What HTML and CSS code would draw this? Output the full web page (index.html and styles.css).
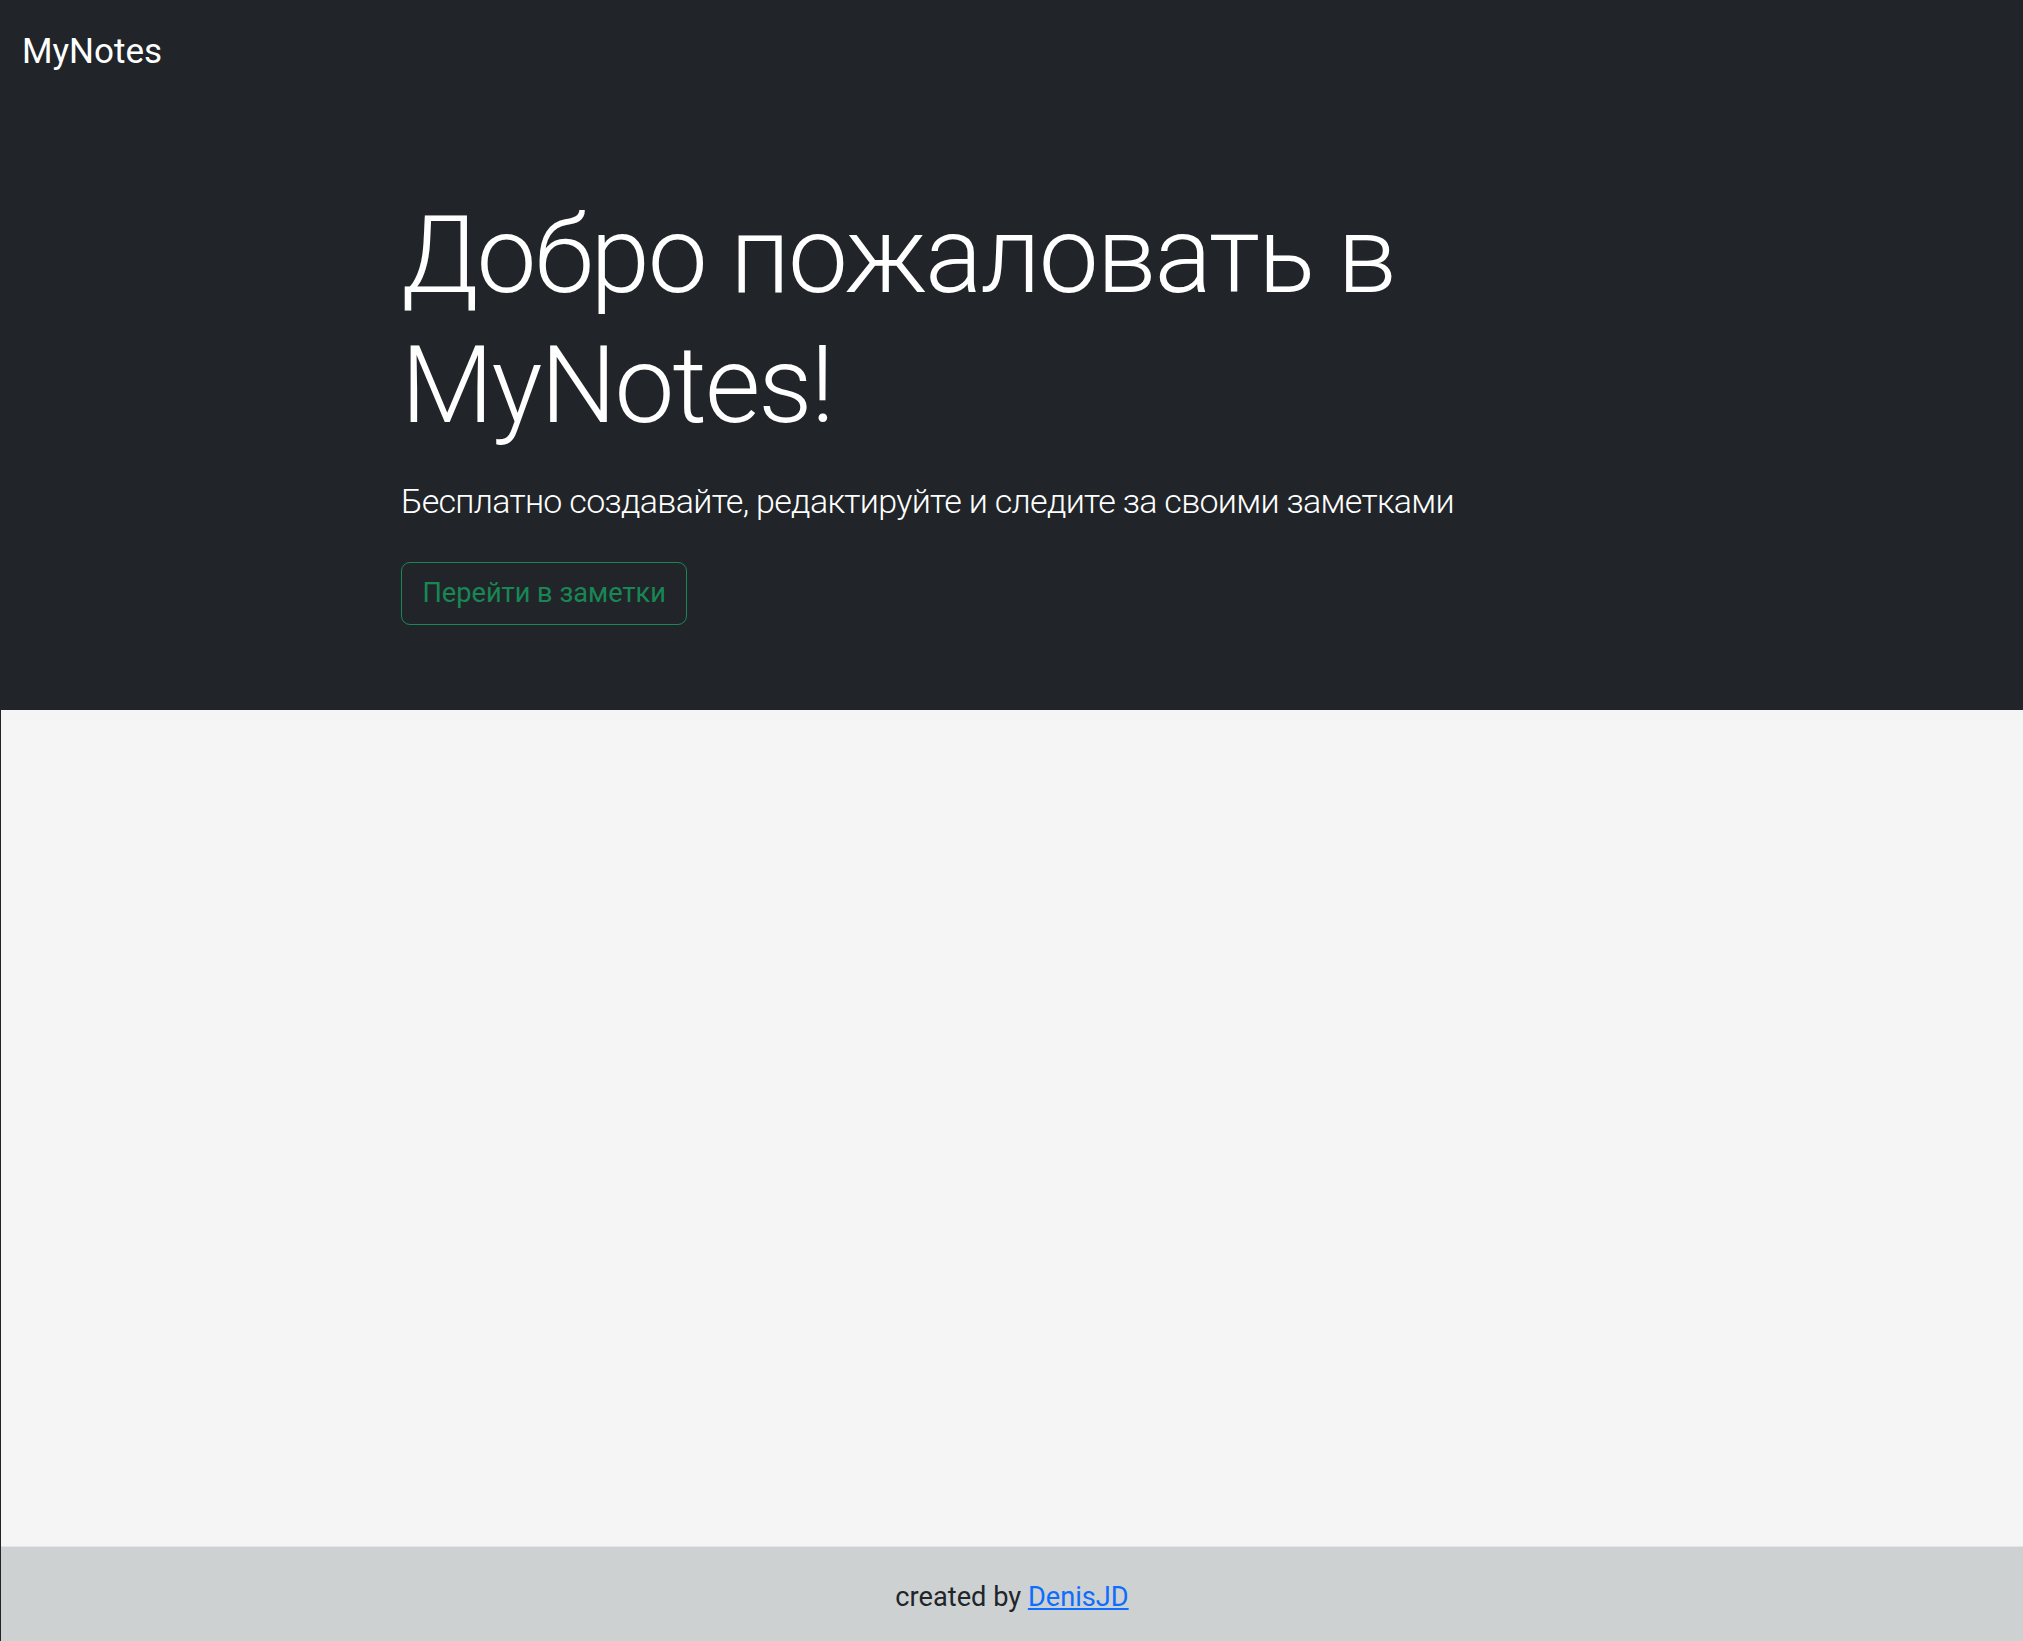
FILE: index.html
```html
<!DOCTYPE html>
<html lang="ru">
<head>
<meta charset="utf-8">
<title>MyNotes</title>
<link rel="stylesheet" href="styles.css">
</head>
<body>
<div class="top">
  <nav class="navbar">
    <a class="brand" href="#">MyNotes</a>
  </nav>
  <section class="hero">
    <div class="container">
      <h1 class="display">Добро пожаловать в MyNotes!</h1>
      <p class="lead">Бесплатно создавайте, редактируйте и следите за своими заметками</p>
      <a class="btn-outline" href="#">Перейти в заметки</a>
    </div>
  </section>
</div>
<div class="bottom">
  <main class="content"></main>
  <footer class="footer">
    <span>created by <a href="#" class="link">DenisJD</a></span>
  </footer>
</div>
</body>
</html>
```

FILE: styles.css
```css
* { box-sizing: border-box; }

html, body {
  margin: 0;
  padding: 0;
  height: 100%;
}

body {
  background: #212529;
  font-family: Roboto, "Liberation Sans", sans-serif;
  color: #212529;
  display: flex;
  flex-direction: column;
  min-height: 100vh;
}

.top {
  background: #212529;
  color: #fff;
}

.navbar {
  height: 95px;
  padding: 26px 22px 18px;
}

.brand {
  color: #fff;
  text-decoration: none;
  font-size: 35px;
  line-height: 51px;
  font-weight: 400;
  display: inline-block;
}

.hero {
  padding: 96px 0 85px;
}

.container {
  width: 1221px;
  margin: 0 auto;
}

.display {
  margin: 0 0 25px;
  font-size: 107px;
  line-height: 130px;
  font-weight: 300;
  letter-spacing: -2px;
  color: #fff;
}

.lead {
  margin: 0 0 35px;
  font-size: 34px;
  line-height: 51px;
  font-weight: 300;
  letter-spacing: -0.7px;
  color: #fff;
}

.btn-outline {
  display: inline-block;
  border: 1px solid #198754;
  border-radius: 9px;
  color: #198754;
  text-decoration: none;
  font-size: 27.2px;
  line-height: 40.8px;
  padding: 10.2px 20.4px;
  font-weight: 400;
}

.bottom {
  flex: 1;
  display: flex;
  flex-direction: column;
  border-left: 1px solid #212529;
}

.content {
  flex: 1;
  background: #f4f5f4;
}

.footer {
  background: #cdd1d2;
  border-top: 1px solid #e3e5e7;
  padding: 30px 0 23px;
  text-align: center;
  font-size: 27.2px;
  line-height: 40.8px;
  color: #212529;
}

.link {
  color: #0d6efd;
  text-decoration: underline;
}
```
